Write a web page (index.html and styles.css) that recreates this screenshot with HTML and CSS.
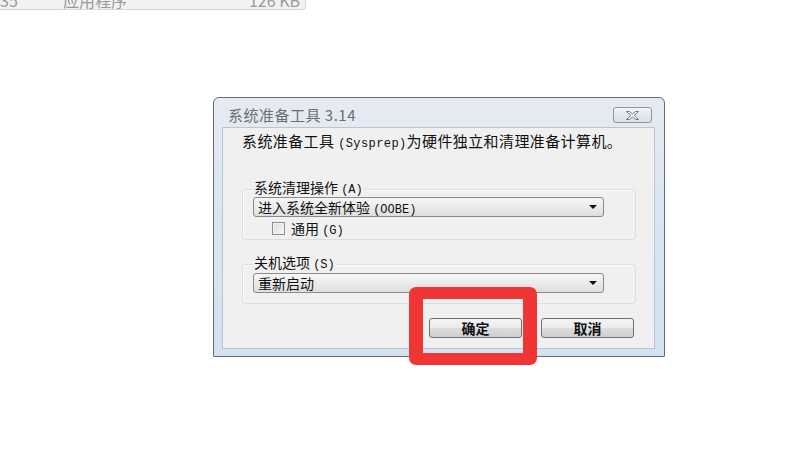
FILE: index.html
```html
<!DOCTYPE html>
<html lang="zh-CN">
<head>
<meta charset="utf-8">
<title>系统准备工具 3.14</title>
<link rel="stylesheet" href="styles.css">
</head>
<body>
<div class="strip">
  <span class="strip-date">35</span>
  <span class="strip-type">应用程序</span>
  <span class="strip-size">126 KB</span>
</div>

<div class="dialog">
  <div class="titlebar">
    <span class="title">系统准备工具 3.14</span>
    <button class="close" type="button" aria-label="关闭">
      <svg width="13" height="9" viewBox="0 0 13 9"><polygon points="0.5,0.5 3.5,0.5 6.5,3 9.5,0.5 12.5,0.5 8.2,4.5 12.5,8.5 9.5,8.5 6.5,6 3.5,8.5 0.5,8.5 4.8,4.5" fill="#f4f6f8" stroke="#6f7a86" stroke-width="1" stroke-linejoin="round"/></svg>
    </button>
  </div>
  <div class="client">
    <p class="desc">系统准备工具 <span class="en">(Sysprep)</span>为硬件独立和清理准备计算机。</p>

    <div class="group group-clean">
      <div class="legend">系统清理操作 <span class="en">(A)</span></div>
      <div class="combo">
        <span>进入系统全新体验 <span class="en">(OOBE)</span></span>
        <span class="arrow"></span>
      </div>
      <label class="check">
        <span class="box"></span>
        <span>通用 <span class="en">(G)</span></span>
      </label>
    </div>

    <div class="group group-shutdown">
      <div class="legend">关机选项 <span class="en">(S)</span></div>
      <div class="combo">
        <span>重新启动</span>
        <span class="arrow"></span>
      </div>
    </div>

    <div class="buttons">
      <button class="btn" type="button">确定</button>
      <button class="btn" type="button">取消</button>
    </div>
  </div>
</div>

<div class="highlight"></div>
</body>
</html>
```

FILE: styles.css
```css
* { box-sizing: border-box; }

html, body {
  margin: 0;
  padding: 0;
  background: #ffffff;
  font-family: "Noto Sans CJK SC", "Noto Sans", sans-serif;
  font-size: 14px;
  color: #111;
}

.en {
  font-family: "Liberation Mono", "DejaVu Sans Mono", monospace;
  font-size: 12px;
  line-height: 8px;
  word-spacing: -4px;
}

/* partially visible explorer row at top */
.strip {
  width: 306px;
  height: 10px;
  background: #f2f2f2;
  border-right: 1px solid #d6d6d6;
  border-bottom: 1px solid #d6d6d6;
  border-bottom-right-radius: 4px;
  overflow: hidden;
  display: flex;
  color: #9a9a9a;
  font-size: 16px;
}
.strip span {
  line-height: 16px;
  margin-top: -8px;
  white-space: nowrap;
}
.strip-date { width: 63px; }
.strip-type { width: 130px; }
.strip-size { flex: 1; text-align: right; padding-right: 5px; }

/* dialog frame */
.dialog {
  margin: 87px 0 0 213px;
  width: 452px;
  height: 260px;
  border: 1px solid #676c72;
  border-radius: 6px 6px 1px 1px;
  background: linear-gradient(#e6ebf1, #dae6f2 40%, #d3e2f1);
  padding: 0 9px 7px 8px;
  display: flex;
  flex-direction: column;
}

.titlebar {
  height: 29px;
  display: flex;
  justify-content: space-between;
  align-items: flex-start;
  flex: none;
}
.title {
  margin: 8px 0 0 6px;
  line-height: 18px;
  font-size: 15px;
  letter-spacing: 0.5px;
  color: #6b6f75;
}
.close {
  margin: 9px 3px 0 0;
  width: 39px;
  height: 16px;
  padding: 0;
  border: 1px solid #8d98a4;
  border-radius: 3px;
  background: linear-gradient(#f3f6f9, #e2e8ee 50%, #d9e0e8);
  display: flex;
  align-items: center;
  justify-content: center;
}
.close svg { display: block; }

.client {
  flex: 1;
  background: #f0f0f0;
  border: 1px solid #b9c5d1;
  display: flex;
  flex-direction: column;
}

.desc {
  margin: 3px 0 0 19px;
  height: 20px;
  line-height: 20px;
  font-size: 15px;
  letter-spacing: 0.4px;
  color: #111;
  white-space: nowrap;
}

.group {
  margin-left: 19px;
  width: 394px;
  border: 1px solid #d9dfe4;
  border-radius: 3px;
  box-shadow: inset 1px 1px 0 #fafafa;
  padding: 0 0 0 10px;
}
.group-clean { margin-top: 38px; padding-bottom: 3px; }
.group-shutdown { margin-top: 24px; padding-bottom: 10px; }

.legend {
  display: block;
  width: fit-content;
  height: 16px;
  margin-top: -11px;
  line-height: 16px;
  padding: 0 1px;
  background: #f0f0f0;
  color: #111;
  white-space: nowrap;
}

.combo {
  width: 351px;
  height: 20px;
  border: 1px solid #8a8a8a;
  border-radius: 3px;
  background: linear-gradient(#f6f6f6, #ebebeb 50%, #dedede);
  display: flex;
  align-items: center;
  justify-content: space-between;
  padding: 0 6px 0 4px;
  line-height: 18px;
  color: #111;
}
.group-clean .combo { margin-top: 2px; }
.group-shutdown .combo { margin-top: 3px; }

.arrow {
  width: 0;
  height: 0;
  border-left: 4px solid transparent;
  border-right: 4px solid transparent;
  border-top: 4px solid #111;
}

.check {
  margin: 3px 0 0 19px;
  height: 16px;
  display: flex;
  align-items: center;
  gap: 6px;
  line-height: 16px;
}
.box {
  width: 13px;
  height: 13px;
  border: 1px solid #8e8f8f;
  background: linear-gradient(135deg, #dcdcdc, #f7f7f7);
  box-shadow: inset 0 0 0 1px #f4f4f4;
}

.buttons {
  margin-top: 14px;
  display: flex;
  justify-content: flex-end;
  gap: 19px;
  padding-right: 20px;
}
.btn {
  width: 93px;
  height: 20px;
  padding: 0;
  border: 1px solid #707070;
  border-radius: 3px;
  background: linear-gradient(#f4f4f4, #ebebeb 50%, #dddddd 51%, #cfcfcf);
  font-family: "Noto Sans CJK SC", sans-serif;
  font-size: 14px;
  font-weight: 700;
  line-height: 18px;
  color: #111;
}

/* red annotation rectangle drawn over the screenshot */
.highlight {
  position: absolute;
  left: 409px;
  top: 287px;
  width: 128px;
  height: 78px;
  border: 13px solid #f03535;
  border-width: 12px 14px 12px 14px;
  border-radius: 7px;
}
```
